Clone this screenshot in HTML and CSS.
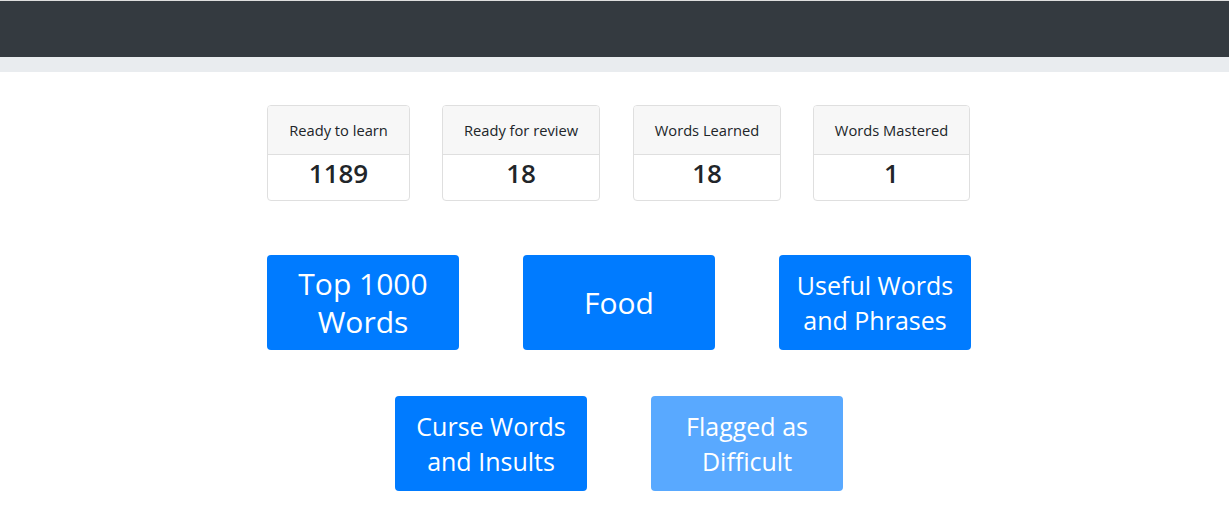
FILE: index.html
```html
<!DOCTYPE html>
<html lang="en">
<head>
<meta charset="utf-8">
<title>Vocabulary</title>
<link rel="stylesheet" href="styles.css">
</head>
<body>
  <div class="topline"></div>
  <nav class="navbar"></nav>
  <div class="subbar"></div>
  <main class="main">
    <section class="stats">
      <div class="card card-learn">
        <div class="card-header">Ready to learn</div>
        <div class="card-body">1189</div>
      </div>
      <div class="card card-review">
        <div class="card-header">Ready for review</div>
        <div class="card-body">18</div>
      </div>
      <div class="card card-learned">
        <div class="card-header">Words Learned</div>
        <div class="card-body">18</div>
      </div>
      <div class="card card-mastered">
        <div class="card-header">Words Mastered</div>
        <div class="card-body">1</div>
      </div>
    </section>
    <section class="decks">
      <div class="deck-row">
        <button class="deck deck-big">Top 1000 Words</button>
        <button class="deck deck-big">Food</button>
        <button class="deck">Useful Words and Phrases</button>
      </div>
      <div class="deck-row">
        <button class="deck">Curse Words and Insults</button>
        <button class="deck deck-disabled" disabled>Flagged as Difficult</button>
      </div>
    </section>
  </main>
</body>
</html>
```

FILE: styles.css
```css
* { box-sizing: border-box; }
html, body { margin: 0; padding: 0; background: #fff; }
body {
  font-family: "Open Sans", "Noto Sans", "Liberation Sans", sans-serif;
  color: #212529;
}
.topline { height: 1px; background: #dedede; }
.navbar { height: 56px; background: #343a40; }
.subbar { height: 15px; background: #e9ecef; }

.main { padding: 33px 0 0 8px; }

.stats {
  display: flex;
  justify-content: center;
  gap: 32px;
}
.card {
  border: 1px solid #dfdfdf;
  border-radius: 4px;
  background: #fff;
  overflow: hidden;
  text-align: center;
}
.card-learn { width: 143px; }
.card-review { width: 158px; margin-right: 1px; }
.card-learned { width: 148px; }
.card-mastered { width: 157px; }
.card-header {
  background: #f7f7f7;
  border-bottom: 1px solid #dfdfdf;
  height: 49px;
  line-height: 48px;
  font-size: 14.7px;
  white-space: nowrap;
}
.card-body {
  height: 45px;
  line-height: 36px;
  padding-top: 0;
  font-size: 26px;
  font-weight: 600;
}

.decks {
  margin-top: 54px;
  display: flex;
  flex-direction: column;
  align-items: center;
  gap: 46px;
}
.deck-row {
  display: flex;
  justify-content: center;
  gap: 64px;
  padding-left: 1px;
}
.deck {
  width: 192px;
  height: 95px;
  border: none;
  border-radius: 4px;
  background: #007bff;
  color: #fff;
  font-family: inherit;
  font-size: 25px;
  line-height: 35px;
  padding: 0 10px;
  text-align: center;
  cursor: pointer;
}
.deck-big {
  font-size: 30px;
  line-height: 38px;
}
.deck-disabled {
  background: #59a9ff;
  cursor: default;
}
```
